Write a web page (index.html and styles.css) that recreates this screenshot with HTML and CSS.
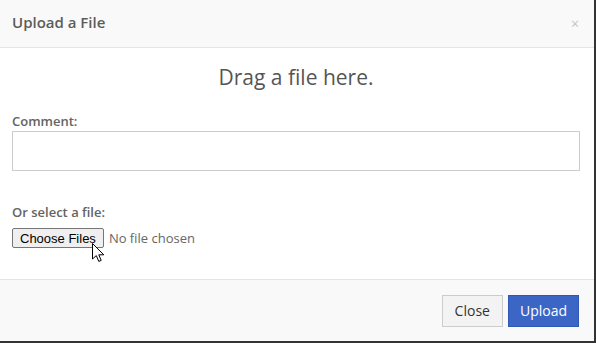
FILE: index.html
```html
<!DOCTYPE html>
<html lang="en">
<head>
  <meta charset="UTF-8" />
  <meta name="viewport" content="width=device-width, initial-scale=1.0" />
  <title>Upload a File</title>
  <link rel="stylesheet" href="styles.css">
</head>
<body>
  <div class="modal">
    <div class="modal-header">
      <div class="modal-title">Upload a File</div>
      <span class="close-x">&times;</span>
    </div>

    <div class="modal-body">
      <h2 class="drop-zone">Drag a file here.</h2>
      <label class="field-label" for="comment">Comment:</label>
      <input type="text" id="comment" class="comment-input" />
      <label class="field-label file-label" for="files">Or select a file:</label>
      <div class="file-row">
        <input type="file" id="files" class="file-input" multiple />
        <svg class="cursor" width="13" height="20" viewBox="0 0 13 20">
          <path d="M0.5 0.5 L0.5 16 L4.3 12.6 L6.8 18.4 L9.2 17.4 L6.8 11.8 L11.8 11.8 Z" fill="#fff" stroke="#000" stroke-width="1" stroke-linejoin="miter" />
        </svg>
      </div>
    </div>

    <div class="modal-footer">
      <button class="btn btn-default">Close</button>
      <button class="btn btn-primary">Upload</button>
    </div>
  </div>
</body>
</html>
```

FILE: styles.css
```css
body {
  margin: 0;
  background: #333;
  font-family: 'Open Sans', sans-serif;
  color: #555;
}

.modal {
  width: 594px;
  height: 341px;
  background: white;
  display: flex;
  flex-direction: column;
}

.modal-header {
  background: #f9f9f9;
  border-bottom: 1px solid #e5e5e5;
  display: flex;
  justify-content: space-between;
  align-items: center;
  height: 47px;
  padding: 0 15px 0 12px;
  box-sizing: content-box;
}

.modal-title {
  font-size: 15px;
  font-weight: 600;
  line-height: 21px;
  margin-top: -2px;
  color: #5c5c5c;
}

.close-x {
  font-size: 14px;
  line-height: 14px;
  color: #c4c4c4;
  margin-top: 1px;
}

.modal-body {
  flex: 1;
  padding: 15px 14px 0 12px;
  display: flex;
  flex-direction: column;
}

.drop-zone {
  margin: 0;
  font-size: 21px;
  font-weight: 400;
  text-align: center;
  line-height: 29px;
}

.field-label {
  font-size: 13px;
  font-weight: 600;
  line-height: 18px;
  margin-top: 20px;
  color: #636363;
}

.comment-input {
  margin: 1px 0 0;
  height: 40px;
  box-sizing: border-box;
  border: 1px solid #ccc;
  padding: 6px 10px;
  font-family: 'Open Sans', sans-serif;
  font-size: 13px;
}

.file-label {
  margin-top: 32px;
}

.file-row {
  position: relative;
  margin-top: 7px;
}

.file-input {
  display: block;
  font-family: 'Open Sans', sans-serif;
  font-size: 13px;
  color: #666;
}

.file-input::file-selector-button {
  font-family: 'Liberation Sans', Arial, sans-serif;
  font-size: 13px;
  color: #000;
  background: #efefef;
  border: 1px solid #767676;
  border-radius: 2px;
  padding: 1px 7px;
  height: 20px;
  margin-right: 5px;
}

.cursor {
  position: absolute;
  left: 80px;
  top: 15px;
}

.modal-footer {
  border-top: 1px solid #e5e5e5;
  background: #f9f9f9;
  padding: 15px 15px 14px;
  display: flex;
  justify-content: flex-end;
  gap: 5px;
}

.btn {
  font-family: 'Open Sans', sans-serif;
  font-size: 14px;
  line-height: 20px;
  padding: 5px 12px;
  border: 1px solid;
  border-radius: 0;
  cursor: pointer;
}

.btn-default {
  background: #f3f3f3;
  border-color: #ccc;
  color: #333;
}

.btn-primary {
  background: #3b66c6;
  border-color: #2f57b3;
  color: white;
  padding: 5px 11px;
}
```
